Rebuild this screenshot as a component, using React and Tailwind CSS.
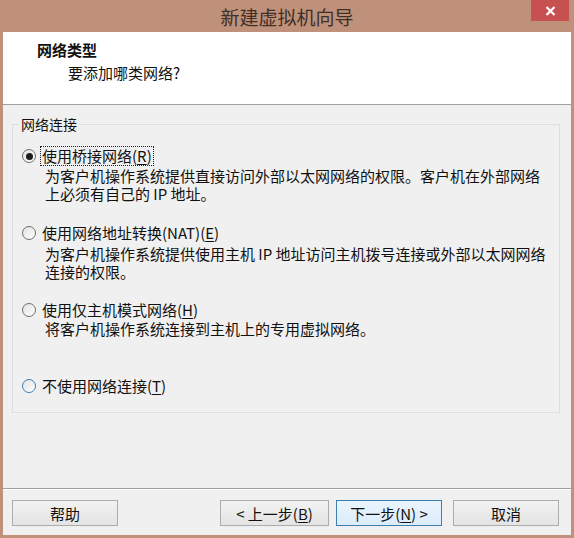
import React from "react";

const font = { fontFamily: '"Noto Sans CJK SC", "Noto Sans", sans-serif' };

function Radio({ checked, hover }) {
  return (
    <span
      className={`flex h-[14px] w-[14px] shrink-0 items-center justify-center rounded-full border bg-gradient-to-br from-[#e2e2e2] to-white ${
        hover ? "border-[#3c7fb1]" : "border-[#6f6f6f]"
      }`}
    >
      {checked && <span className="h-[7px] w-[7px] rounded-full bg-[#1e1e1e]" />}
    </span>
  );
}

function Option({ label, hotkey, checked, hover, focus, className }) {
  return (
    <div className={`flex h-[20px] items-center pl-[9px] ${className}`}>
      <Radio checked={checked} hover={hover} />
      <span
        className={`ml-[4px] px-[1px] leading-[18px] ${
          focus ? "border border-dotted border-[#222]" : "border border-transparent"
        }`}
      >
        {label}(<span className="underline underline-offset-2">{hotkey}</span>)
      </span>
    </div>
  );
}

function Desc({ lines, className }) {
  return (
    <div className={`pl-[32px] pr-[10px] ${className}`}>
      {lines.map((l) => (
        <div key={l} className="h-[18px] leading-[18px]">
          {l}
        </div>
      ))}
    </div>
  );
}

function Button({ children, primary, className }) {
  return (
    <button
      className={`h-[26px] w-[106px] border text-[15px] leading-none text-[#111] ${
        primary
          ? "border-[#3c7fb1] bg-gradient-to-b from-[#eaf4fc] to-[#dcecfc]"
          : "border-[#acacac] bg-gradient-to-b from-[#f2f2f2] to-[#e4e4e4]"
      } ${className}`}
    >
      {children}
    </button>
  );
}

export default function App() {
  return (
    <div className="flex h-[538px] w-[574px] flex-col bg-[#c0917a]" style={font}>
      {/* title bar */}
      <div className="relative flex h-[32px] items-center justify-center">
        <span className="text-[19px] leading-none text-[#3e2f27]">新建虚拟机向导</span>
        <div className="absolute right-[5px] top-0 flex h-[21px] w-[38px] items-center justify-center bg-[#c75050]">
          <svg width="11" height="10" viewBox="0 0 11 10">
            <path d="M1.5 1 L9.5 9 M9.5 1 L1.5 9" stroke="white" strokeWidth="2.2" />
          </svg>
        </div>
      </div>

      <div className="mx-[3px] mb-[3px] flex flex-1 flex-col bg-[#f0f0f0] text-[15px] text-[#111]">
        {/* header */}
        <div className="h-[73px] border-b border-[#a0a0a0] bg-white pl-[34px] pt-[8px]">
          <div className="font-bold leading-[20px]">网络类型</div>
          <div className="mt-[3px] pl-[31px] leading-[20px]">要添加哪类网络?</div>
        </div>

        {/* group */}
        <fieldset className="ml-[9px] mr-[11px] mt-[9px] h-[299px] border border-[#d5dfe5]">
          <legend className="ml-[6px] px-[2px] text-[14px] leading-[20px]">网络连接</legend>
          <Option className="mt-[12px]" label="使用桥接网络" hotkey="R" checked focus />
          <Desc
            className="mt-[1px]"
            lines={["为客户机操作系统提供直接访问外部以太网网络的权限。客户机在外部网络", "上必须有自己的 IP 地址。"]}
          />
          <Option className="mt-[20px]" label="使用网络地址转换(NAT)" hotkey="E" />
          <Desc
            className="mt-[2px]"
            lines={["为客户机操作系统提供使用主机 IP 地址访问主机拨号连接或外部以太网网络", "连接的权限。"]}
          />
          <Option className="mt-[19px]" label="使用仅主机模式网络" hotkey="H" />
          <Desc lines={["将客户机操作系统连接到主机上的专用虚拟网络。"]} />
          <Option className="mt-[38px]" label="不使用网络连接" hotkey="T" hover />
        </fieldset>

        <div className="flex-1" />

        {/* buttons */}
        <div className="border-t border-[#a0a0a0] shadow-[inset_0_1px_0_#fff]">
          <div className="flex items-center pb-[9px] pl-[9px] pr-[12px] pt-[11px]">
            <Button>帮助</Button>
            <div className="flex-1" />
            <Button className="w-[109px]">
              &lt; 上一步(<span className="underline underline-offset-2">B</span>)
            </Button>
            <Button primary className="ml-[7px]">
              下一步(<span className="underline underline-offset-2">N</span>) &gt;
            </Button>
            <Button className="ml-[11px]">取消</Button>
          </div>
        </div>
      </div>
    </div>
  );
}
